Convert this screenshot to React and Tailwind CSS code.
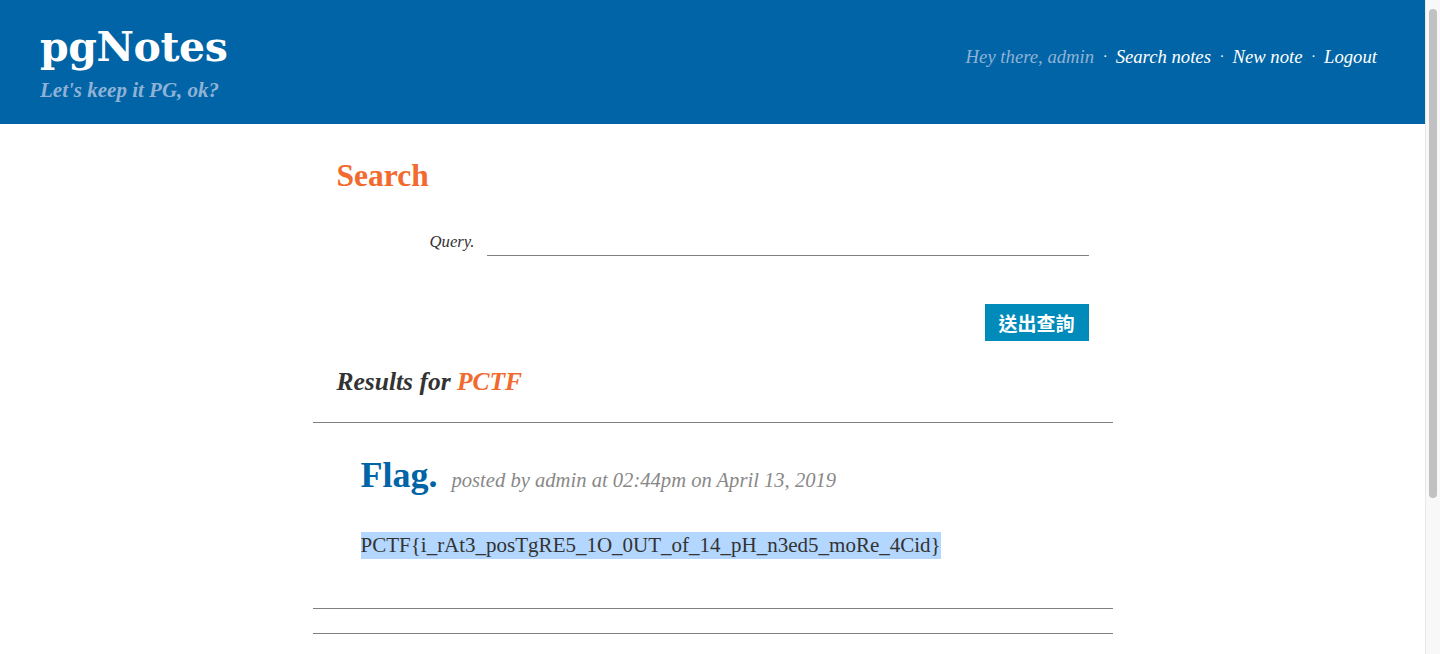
export default function App() {
  const dj = { fontFamily: '"DejaVu Serif", "Liberation Serif", serif' };
  const lib = { fontFamily: '"Liberation Serif", "Times New Roman", serif' };
  return (
    <div className="flex h-[654px] overflow-hidden bg-white" style={lib}>
      <div className="flex-1 min-w-0 flex flex-col">
        <header className="h-[124px] shrink-0 bg-[#0064a6] flex items-start justify-between pl-[40px] pr-[48px]">
          <div className="pt-[23px]">
            <div className="text-white font-bold text-[41px] leading-[48px] tracking-[-0.4px]" style={dj}>pgNotes</div>
            <div className="text-[#8fb2d6] font-bold italic text-[21px] leading-[24px] mt-[7px]">Let's keep it PG, ok?</div>
          </div>
          <nav className="pt-[45px] flex items-center italic text-[18.7px] leading-[24px] text-white">
            <span className="text-[#8fb2d6]">Hey there, admin</span>
            <span className="mx-[9px] text-[14px]">·</span>
            <span>Search notes</span>
            <span className="mx-[9px] text-[14px]">·</span>
            <span>New note</span>
            <span className="mx-[9px] text-[14px]">·</span>
            <span>Logout</span>
          </nav>
        </header>
        <main className="w-[800px] mx-auto">
          <h1 className="px-6 pt-[34px] text-[#f26a2d] font-bold text-[31.5px] leading-[36px]">Search</h1>
          <div className="px-6 mt-[38px] flex items-end">
            <label className="w-[138px] text-right italic text-[16.7px] leading-[20px] text-[#333] pb-[4px]">Query.</label>
            <div className="ml-[12px] flex-1 h-[24px] border-b border-[#808080]"></div>
          </div>
          <div className="px-6 mt-[48px] flex justify-end">
            <button className="bg-[#008bba] text-white font-bold text-[19px] leading-[37px] h-[37px] w-[104px] text-center" style={{ fontFamily: '"Noto Sans CJK TC", "Noto Sans CJK SC", sans-serif' }}>送出查詢</button>
          </div>
          <h2 className="px-6 mt-[26px] font-bold italic text-[25.5px] leading-[30px] text-[#333]">
            Results for <span className="text-[#f26a2d]">PCTF</span>
          </h2>
          <hr className="mt-[25px] border-0 border-t border-[#808080]" />
          <div className="px-12 pt-[30px] pb-[49px]">
            <div className="flex items-baseline">
              <span className="text-[#0064a6] font-bold text-[36px] leading-[44px]">Flag.</span>
              <span className="ml-[14px] italic text-[#888] text-[20.6px]">posted by admin at 02:44pm on April 13, 2019</span>
            </div>
            <p className="mt-[35px] text-[21px] leading-[27px] text-[#333]">
              <span className="inline-block bg-[#b3d7fe] leading-[27px]">PCTF{'{'}i_rAt3_posTgRE5_1O_0UT_of_14_pH_n3ed5_moRe_4Cid{'}'}</span>
            </p>
          </div>
          <hr className="border-0 border-t border-[#808080]" />
          <hr className="mt-[24px] border-0 border-t border-[#808080]" />
        </main>
      </div>
      <div className="w-[15px] shrink-0 bg-[#f8f8f8] border-l border-[#e8e8e8] flex justify-center pt-[9px]">
        <div className="w-[8px] h-[489px] rounded-full bg-[#c1c1c1]"></div>
      </div>
    </div>
  );
}
